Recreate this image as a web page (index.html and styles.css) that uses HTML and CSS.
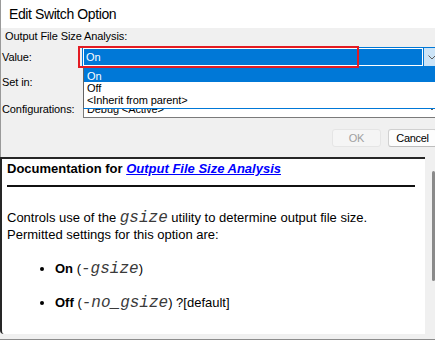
FILE: index.html
```html
<!DOCTYPE html>
<html lang="en">

<head>
    <meta charset="UTF-8">
    <meta name="viewport" content="width=device-width, initial-scale=1.0">
    <title>Edit Switch Option</title>
    <link rel="stylesheet" href="styles.css">
</head>
<body>
    <div class="window">
        <div class="titlebar">Edit Switch Option</div>
        <div class="dialog">
            <div class="group-label">Output File Size Analysis:</div>
            <div class="form">
                <div class="row">
                    <span class="row-label">Value:</span>
                    <div class="combo combo-active">
                        <div class="combo-text">On</div>
                        <div class="combo-btn">
                            <svg width="8" height="5" viewBox="0 0 8 5"><polyline points="0.5,0.5 4,4 7.5,0.5" fill="none" stroke="#5f5f5f" stroke-width="1"/></svg>
                        </div>
                    </div>
                </div>
                <div class="row">
                    <span class="row-label">Set in:</span>
                    <div class="field"></div>
                </div>
                <div class="row row-config">
                    <span class="row-label">Configurations:</span>
                    <div class="combo">
                        <div class="combo-text">Debug &lt;Active&gt;</div>
                        <div class="combo-btn">
                            <svg width="8" height="5" viewBox="0 0 8 5"><polyline points="0.5,0.5 4,4 7.5,0.5" fill="none" stroke="#5f5f5f" stroke-width="1"/></svg>
                        </div>
                    </div>
                </div>
            </div>
            <div class="buttons">
                <button class="btn" disabled>OK</button>
                <button class="btn">Cancel</button>
            </div>
        </div>
        <div class="doc">
            <div class="doc-body">
                <div class="doc-title">Documentation for <a href="#">Output File Size Analysis</a></div>
                <hr class="rule">
                <p>Controls use of the <code>gsize</code> utility to determine output file size. Permitted settings for this option are:</p>
                <ul class="settings">
                    <li><b>On</b> (<code>-gsize</code>)</li>
                    <li><b>Off</b> (<code>-no_gsize</code>) ?[default]</li>
                </ul>
            </div>
            <div class="doc-scroll">
                <div class="thumb"></div>
            </div>
        </div>

        <!-- open list of the Value combo -->
        <ul class="dropdown">
            <li class="selected">On</li>
            <li>Off</li>
            <li>&lt;Inherit from parent&gt;</li>
        </ul>
        <!-- red marker round the value -->
        <div class="mark"></div>
    </div>
</body>
</html>
```

FILE: styles.css
```css
* {
    margin: 0;
    padding: 0;
    box-sizing: border-box;
}

body {
    width: 435px;
    height: 340px;
    overflow: hidden;
    background: #f0f0f0;
    font-family: "Liberation Sans", Arial, sans-serif;
    color: #000;
}

.window {
    position: relative;
    width: 435px;
    height: 340px;
    overflow: hidden;
}

.titlebar {
    height: 28px;
    padding-left: 8px;
    line-height: 28px;
    font-size: 14px;
    letter-spacing: -0.4px;
    background: #fff;
    border-left: 1px solid #9a9a9a;
}

.dialog {
    height: 129px;
    padding: 1px 0 0 1px;
    border-left: 1px solid #9a9a9a;
    font-size: 11px;
    letter-spacing: -0.1px;
}

.group-label {
    padding-left: 3px;
    line-height: 14px;
}

.form {
    margin-top: 4px;
}

.row {
    display: flex;
    align-items: center;
    height: 20px;
}

.row + .row {
    margin-top: 5px;
}

.row + .row-config {
    height: 19px;
    margin-top: 7px;
}

.row-label {
    width: 80px;
    flex-shrink: 0;
}

.combo {
    display: flex;
    flex-shrink: 0;
    width: 359px;
    height: 100%;
    border: 1px solid #7a7a7a;
    background: #fff;
}

.row-config .combo {
    width: 358px;
    margin-left: 1px;
}

.combo-text {
    flex: 1;
    display: flex;
    align-items: center;
    margin: 1px;
    padding-left: 2px;
}

.combo-btn {
    width: 17px;
    display: flex;
    align-items: center;
    justify-content: center;
}

.combo-active {
    border-color: #0078d7;
}

.combo-active .combo-text {
    background: #0078d7;
    color: #fff;
}

.combo-active .combo-btn {
    border-left: 1px solid #0078d7;
    background: #cce4f7;
}

.field {
    flex-shrink: 0;
    width: 358px;
    height: 100%;
    margin-left: 1px;
    border: 1px solid #7a7a7a;
    background: #fff;
}

.buttons {
    display: flex;
    justify-content: flex-end;
    gap: 7px;
    margin: 11px -2px 0 0;
}

.btn {
    width: 49px;
    height: 18px;
    border: 1px solid #d0d0d0;
    border-bottom-color: #bdbdbd;
    border-radius: 3px;
    background: #fdfdfd;
    font-family: inherit;
    font-size: 11px;
    letter-spacing: -0.3px;
    color: #000;
}

.btn:disabled {
    background: #f5f5f5;
    border-color: #e5e5e5;
    color: #a0a0a0;
}

.dropdown {
    position: absolute;
    top: 67px;
    left: 83px;
    width: 360px;
    list-style: none;
    padding-bottom: 2px;
    background: #fff;
    border-left: 1px solid #646464;
    border-bottom: 1px solid #0078d7;
    font-size: 11px;
    letter-spacing: -0.1px;
}

.dropdown li {
    padding-left: 3px;
    line-height: 12px;
}

.dropdown .selected {
    padding-top: 3px;
    background: #0078d7;
    color: #fff;
}

.mark {
    position: absolute;
    top: 46px;
    left: 78px;
    width: 281px;
    height: 22px;
    border: 2px solid #e31b23;
}

.doc {
    display: flex;
    height: 183px;
    border-bottom: 1px solid #8c8c8c;
}

.doc-body {
    width: 425px;
    height: 177px;
    padding: 1px 10px 0 5px;
    background: #fff;
    border-top: 2px solid #262626;
    border-left: 2px solid #262626;
    border-bottom-left-radius: 4px;
    font-size: 13px;
    line-height: 17px;
}

.doc-scroll {
    flex: 1;
}

.thumb {
    width: 3px;
    height: 110px;
    margin: 14px 0 0 7px;
    background: #8a8a8a;
    border-radius: 2px;
}

.doc-title {
    font-weight: bold;
}

.doc-title a {
    color: #0000ff;
    font-style: italic;
}

.rule {
    height: 0;
    margin-top: 8px;
    border: 0;
    border-top: 2px solid #111;
}

.doc-body p {
    margin-top: 22px;
}

.settings {
    margin-top: 17px;
    padding-left: 48px;
}

.settings li + li {
    margin-top: 17px;
}

code {
    font-family: "Liberation Mono", monospace;
    font-style: italic;
    font-size: 16px;
    line-height: 16px;
    color: #3a3a3a;
}
```
